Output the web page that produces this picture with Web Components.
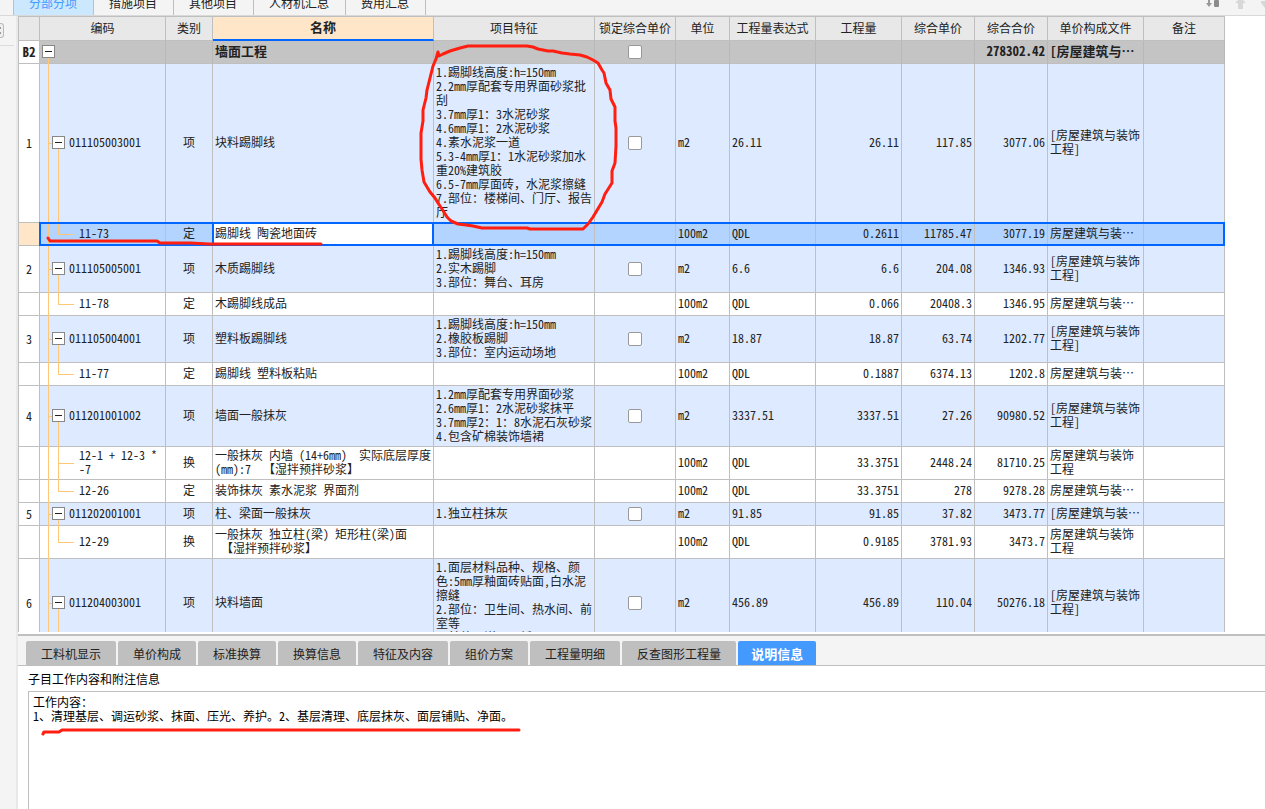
<!DOCTYPE html>
<html lang="zh-CN">
<head>
<meta charset="utf-8">
<meta name="viewport" content="width=device-width, initial-scale=1">
<title>分部分项</title>
<style>
  html, body { margin: 0; height: 100%; }
  body {
    font: 12px/14px "Noto Sans Mono CJK SC", "Noto Sans CJK SC", monospace;
    color: #222;
    background: #fff;
    overflow: hidden;
    --line: #bfbfbf;
    --chrome: #f4f4f4;
    --accent: #0066ff;
    --focus: #ffe6c8;
    --ink: #ff1e10;
    --tree: #ffc878;
  }
</style>
</head>
<body>
<app-shell>
  <project-tabs slot="tabs"></project-tabs>
  <side-rail slot="rail"></side-rail>
  <cost-grid slot="grid">
    <ink-mark slot="ink" points="438,36 439,40 443,38 450,35 460,32 468,30 527,30 533,31 538,33 548,35 553,35 562,37 570,38 580,39 587,41 593,44 598,47 602,54 604,57 606,67 610,74 611,83 615,91 615,105 616,112 616,130 615,147 612,155 612,167 605,178 602,186 593,201 588,208 583,213 530,213 527,212 482,212 473,210 466,209 458,208 451,205 447,201 442,193 438,187 435,182 430,176 424,166 422,154 421,143 421,117 423,105 423,94 426,82 427,74 430,62 433,50 436,43 438,36|48,222 50,225 157,225 160,227 190,227 209,228 321,228"></ink-mark>
  </cost-grid>
  <detail-panel slot="detail">
    <ink-mark slot="ink" points="43,98 44,96 59,96 62,94 519,94"></ink-mark>
  </detail-panel>
</app-shell>

<script>
const define = (name, html, setup) => customElements.define(name, class extends HTMLElement {
  constructor() {
    super();
    const root = this.attachShadow({ mode: 'open' });
    const t = document.createElement('template');
    t.innerHTML = html;
    root.append(t.content.cloneNode(true));
  }
  connectedCallback() { if (setup) setup(this, this.shadowRoot); }
});

/* Page frame: tabs on top, rail on the left, grid above the detail panel */
define('app-shell', `
<style>
  :host { display: grid; height: 100vh; grid-template: 16px minmax(0, 1fr) auto / 18px minmax(0, 1fr); overflow: hidden; }
  .tabs { grid-column: 1 / -1; }
  .rail { grid-row: 2 / 4; }
  .tabs, .rail, main, section { display: grid; min-width: 0; min-height: 0; }
</style>
<nav class="tabs"><slot name="tabs"></slot></nav>
<aside class="rail"><slot name="rail"></slot></aside>
<main><slot name="grid"></slot></main>
<section><slot name="detail"></slot></section>`);

define('project-tabs', `
<style>
  :host { display: flex; justify-content: space-between; align-items: flex-end; background: var(--chrome); border-bottom: 1px solid #d9d9d9; overflow: hidden; }
  .list { display: flex; margin-left: 13px; border-left: 1px solid var(--line); }
  button { font: inherit; color: #222; height: 24px; padding: 0 16px 0 15px; border: 0; border-right: 1px solid var(--line); background: var(--chrome); white-space: nowrap; }
  button[aria-selected="true"] { color: #4499ff; background: #cce8ff; }
  .tools { display: flex; align-self: flex-start; gap: 15px; }
  .tools button { height: 15px; padding: 0; border: 0; display: flex; }
  svg { display: block; }
</style>
<div class="list" role="tablist">
  <button role="tab" aria-selected="true">分部分项</button>
  <button role="tab">措施项目</button>
  <button role="tab">其他项目</button>
  <button role="tab">人材机汇总</button>
  <button role="tab">费用汇总</button>
</div>
<div class="tools">
  <button aria-label="排序"><svg width="14" height="10"><path d="M2 0h2v3h2L3 7 0 3h2z" fill="#999"/><rect x="8" width="5" height="7" rx="1" fill="#8c8c8c"/></svg></button>
  <button aria-label="上移"><svg width="11" height="10"><path d="M3 0h5l3 3H8v6H3V3H0z" fill="#d8d8d8"/></svg></button>
  <button aria-label="下移"><svg width="4" height="10"><path d="M0 1h4v7L0 3z" fill="#d8d8d8"/></svg></button>
</div>`);

define('side-rail', `
<style>
  :host { display: block; background: var(--chrome); border-right: 2px solid #e9e9e9; }
  div { height: 29px; border-bottom: 1px solid #dcdcdc; margin-right: 2px; display: flex; align-items: center; }
  button { width: 4px; height: 15px; padding: 0; border: 1px solid #bbb; border-left: 0; border-radius: 0 3px 3px 0; background: #eee; display: flex; align-items: center; }
</style>
<div><button aria-label="展开导航"><svg width="2" height="7"><path d="M0 0h1v2H0zM0 5h1v2H0z" fill="#999"/></svg></button></div>`);

/* Freehand strokes laid over the host they are slotted into */
define('ink-mark', `
<style>
  :host { position: absolute; inset: 0; pointer-events: none; z-index: 2; }
  svg { display: block; width: 100%; height: 100%; overflow: visible; }
  polyline { fill: none; stroke: var(--ink); stroke-width: 3; stroke-linejoin: round; stroke-linecap: round; }
</style>
<svg aria-hidden="true"></svg>`, (host, root) => {
  root.querySelector('svg').innerHTML = host.getAttribute('points').split('|')
    .map(p => `<polyline points="${p.split(' ').map(q => { const [x, y] = q.split(','); return (x - 18) + ',' + y; }).join(' ')}"/>`).join('');
});

define('tree-toggle', `
<style>
  :host { display: inline-flex; flex: none; position: relative; z-index: 1; }
  button { width: 13px; height: 13px; padding: 0; border: 1px solid #888; background: #fff; display: grid; place-items: center; }
  svg { display: block; }
</style>
<button aria-label="折叠" aria-expanded="true"><svg width="7" height="1"><rect width="7" height="1" fill="#222"/></svg></button>`);

const rows = [
  { t: 'root', n: 'B2', name: '墙面工程', lock: 1, total: '278302.42', file: '[房屋建筑与…' },
  { t: 'item', n: '1', code: '011105003001', kind: '项', name: '块料踢脚线', feat: '1.踢脚线高度:h=150mm\n2.2mm厚配套专用界面砂浆批\n刮\n3.7mm厚1：3水泥砂浆\n4.6mm厚1：2水泥砂浆\n4.素水泥浆一道\n5.3-4mm厚1：1水泥砂浆加水\n重20%建筑胶\n6.5-7mm厚面砖，水泥浆擦缝\n7.部位：楼梯间、门厅、报告\n厅', lock: 1, unit: 'm2', expr: '26.11', qty: '26.11', price: '117.85', total: '3077.06', file: '[房屋建筑与装饰\n工程]' },
  { t: 'sub last selected', code: '11-73', kind: '定', name: '踢脚线 陶瓷地面砖', unit: '100m2', expr: 'QDL', qty: '0.2611', price: '11785.47', total: '3077.19', file: '房屋建筑与装…' },
  { t: 'item', n: '2', code: '011105005001', kind: '项', name: '木质踢脚线', feat: '1.踢脚线高度:h=150mm\n2.实木踢脚\n3.部位：舞台、耳房', lock: 1, unit: 'm2', expr: '6.6', qty: '6.6', price: '204.08', total: '1346.93', file: '[房屋建筑与装饰\n工程]' },
  { t: 'sub last', code: '11-78', kind: '定', name: '木踢脚线成品', unit: '100m2', expr: 'QDL', qty: '0.066', price: '20408.3', total: '1346.95', file: '房屋建筑与装…' },
  { t: 'item', n: '3', code: '011105004001', kind: '项', name: '塑料板踢脚线', feat: '1.踢脚线高度:h=150mm\n2.橡胶板踢脚\n3.部位：室内运动场地', lock: 1, unit: 'm2', expr: '18.87', qty: '18.87', price: '63.74', total: '1202.77', file: '[房屋建筑与装饰\n工程]' },
  { t: 'sub last', code: '11-77', kind: '定', name: '踢脚线 塑料板粘贴', unit: '100m2', expr: 'QDL', qty: '0.1887', price: '6374.13', total: '1202.8', file: '房屋建筑与装…' },
  { t: 'item', n: '4', code: '011201001002', kind: '项', name: '墙面一般抹灰', feat: '1.2mm厚配套专用界面砂浆\n2.6mm厚1：2水泥砂浆抹平\n3.7mm厚2：1：8水泥石灰砂浆\n4.包含矿棉装饰墙裙', lock: 1, unit: 'm2', expr: '3337.51', qty: '3337.51', price: '27.26', total: '90980.52', file: '[房屋建筑与装饰\n工程]' },
  { t: 'sub', code: '12-1 + 12-3 *\n-7', kind: '换', name: '一般抹灰 内墙 (14+6mm)  实际底层厚度\n(mm):7  【湿拌预拌砂浆】', unit: '100m2', expr: 'QDL', qty: '33.3751', price: '2448.24', total: '81710.25', file: '房屋建筑与装饰\n工程' },
  { t: 'sub last', code: '12-26', kind: '定', name: '装饰抹灰 素水泥浆 界面剂', unit: '100m2', expr: 'QDL', qty: '33.3751', price: '278', total: '9278.28', file: '房屋建筑与装…' },
  { t: 'item', n: '5', code: '011202001001', kind: '项', name: '柱、梁面一般抹灰', feat: '1.独立柱抹灰', lock: 1, unit: 'm2', expr: '91.85', qty: '91.85', price: '37.82', total: '3473.77', file: '[房屋建筑与装…' },
  { t: 'sub last', code: '12-29', kind: '换', name: '一般抹灰 独立柱(梁) 矩形柱(梁)面\n 【湿拌预拌砂浆】', unit: '100m2', expr: 'QDL', qty: '0.9185', price: '3781.93', total: '3473.7', file: '房屋建筑与装饰\n工程' },
  { t: 'item', n: '6', code: '011204003001', kind: '项', name: '块料墙面', feat: '1.面层材料品种、规格、颜\n色:5mm厚釉面砖贴面,白水泥\n擦缝\n2.部位：卫生间、热水间、前\n室等\n3.其他：详见图纸', lock: 1, unit: 'm2', expr: '456.89', qty: '456.89', price: '110.04', total: '50276.18', file: '[房屋建筑与装饰\n工程]' },
];
const heads = [['', 21], ['编码', 126], ['类别', 47], ['名称', 221], ['项目特征', 161], ['锁定综合单价', 81], ['单位', 54], ['工程量表达式', 86], ['工程量', 86], ['综合单价', 73], ['综合合价', 73], ['单价构成文件', 96], ['备注', 81]];

define('cost-grid', `
<style>
  :host { display: block; position: relative; overflow: hidden; border-bottom: 2px solid #fff; background: #fff; }
  .view { height: 100%; overflow: hidden; }
  table { table-layout: fixed; width: 1207px; border-collapse: separate; border-spacing: 0; border-left: 1px solid var(--line); border-top: 1px solid var(--line); box-sizing: border-box; }
  th, td { box-sizing: border-box; border: 0 solid var(--line); border-width: 0 1px 1px 0; font-weight: normal; white-space: pre; text-align: left; vertical-align: middle; padding: 1px 2px 3px; position: relative; overflow: hidden; }
  thead th { height: 24px; padding: 0 0 2px; background: #e8e8e8; text-align: center; }
  thead th.current { background: var(--focus); font-weight: bold; font-size: 13px; border-bottom: 2px solid var(--accent); }
  tbody tr { height: 23px; }
  tbody th { text-align: center; padding: 2px 0; background: #fff; }
  .item td { background-color: #deeaff; }
  .root td { background-color: #c4c4c4; border-right-color: #b8b8b8; }
  .root th, .root td { font-size: 13px; font-weight: bold; }
  .c { text-align: center; }
  .lock { padding: 2px; }
  .r { text-align: right; }
  input { appearance: none; box-sizing: border-box; width: 14px; height: 14px; margin: 0 auto; border: 1px solid #999; border-radius: 2px; background: #fff; display: block; }
  .code { overflow: visible; padding: 1px 0 3px; }
  .code div { display: flex; align-items: center; gap: 4px; }
  .code::before, .code div::before, .code div::after { content: ""; position: absolute; background: var(--tree); }
  .code::before { left: 8px; top: 0; bottom: -1px; width: 1px; }
  .code div::before { top: 50%; height: 1px; }
  .code div::after { left: 18px; width: 1px; }
  .root .code::before { top: 50%; }
  .root .code div::before, .root .code div::after { content: none; }
  .root .code div { padding-left: 2px; }
  .item .code div::before { left: 9px; width: 3px; }
  .item .code div::after { top: 50%; bottom: -1px; }
  .item .code div { padding-left: 12px; }
  .sub .code div::before { left: 18px; width: 16px; }
  .sub .code div::after { top: 0; bottom: -1px; }
  .sub.last .code div::after { bottom: 50%; }
  .sub .code div { padding-left: 39px; }
  .selected th { background: var(--focus); }
  .selected td { background-color: #b3d4ff; overflow: visible; }
  .selected td.name { background-color: #fff; }
  .selected td::after { content: ""; position: absolute; z-index: 1; inset: -1px; border: 0 solid var(--accent); border-width: 2px 0; pointer-events: none; }
  .selected td.name::after { border-width: 2px; }
  .selected td.code::after { border-left-width: 2px; }
  .selected td:last-child::after { border-right-width: 2px; }
</style>
<div class="view"><table><colgroup></colgroup><thead><tr></tr></thead><tbody></tbody></table></div>
<slot name="ink"></slot>`, (host, root) => {
  root.querySelector('colgroup').innerHTML = heads.map(([, w]) => `<col style="width:${w}px">`).join('');
  root.querySelector('thead tr').innerHTML = heads.map(([h]) => `<th scope="col"${h === '名称' ? ' class="current"' : ''}>${h}</th>`).join('');
  root.querySelector('tbody').innerHTML = rows.map(r => {
    const toggle = r.t.startsWith('sub') ? '' : '<tree-toggle></tree-toggle>';
    const lock = r.lock ? `<input type="checkbox" aria-label="锁定综合单价 ${r.name}">` : '';
    const v = k => r[k] || '';
    return `<tr class="${r.t}"><th scope="row">${v('n')}</th><td class="code"><div>${toggle}<span>${v('code')}</span></div></td><td class="c">${v('kind')}</td><td class="name">${v('name')}</td><td>${v('feat')}</td><td class="lock">${lock}</td><td>${v('unit')}</td><td>${v('expr')}</td><td class="r">${v('qty')}</td><td class="r">${v('price')}</td><td class="r">${v('total')}</td><td>${v('file')}</td><td></td></tr>`;
  }).join('');
});

define('detail-panel', `
<style>
  :host { display: block; position: relative; border-top: 2px solid var(--line); background: #fff; }
  .bar { display: flex; gap: 2px; padding: 5px 8px 0; background: var(--chrome); border-bottom: 1px solid var(--line); }
  button { font: inherit; color: #222; height: 24px; padding: 2px 15px 0; border: 0; border-radius: 2px 2px 0 0; background: #bfbfbf; white-space: nowrap; }
  button[aria-selected="true"] { background: #4499ff; color: #fff; font-weight: bold; font-size: 13px; padding: 2px 13px 0; }
  .body { display: flex; flex-direction: column; padding: 6px 0 0 10px; color: #000; }
  label { height: 19px; }
  textarea { font: inherit; color: #000; height: 118px; box-sizing: border-box; padding: 3px 4px; border: solid var(--line); border-width: 1px 0 0 1px; margin: 0; resize: none; outline: 0; overflow: hidden; background: #fff; }
</style>
<div class="bar" role="tablist">
  <button role="tab">工料机显示</button>
  <button role="tab">单价构成</button>
  <button role="tab">标准换算</button>
  <button role="tab">换算信息</button>
  <button role="tab">特征及内容</button>
  <button role="tab">组价方案</button>
  <button role="tab">工程量明细</button>
  <button role="tab">反查图形工程量</button>
  <button role="tab" aria-selected="true">说明信息</button>
</div>
<div class="body">
  <label for="note">子目工作内容和附注信息</label>
  <textarea id="note">工作内容：
1、清理基层、调运砂浆、抹面、压光、养护。2、基层清理、底层抹灰、面层铺贴、净面。</textarea>
</div>
<slot name="ink"></slot>`);
</script>
</body>
</html>
